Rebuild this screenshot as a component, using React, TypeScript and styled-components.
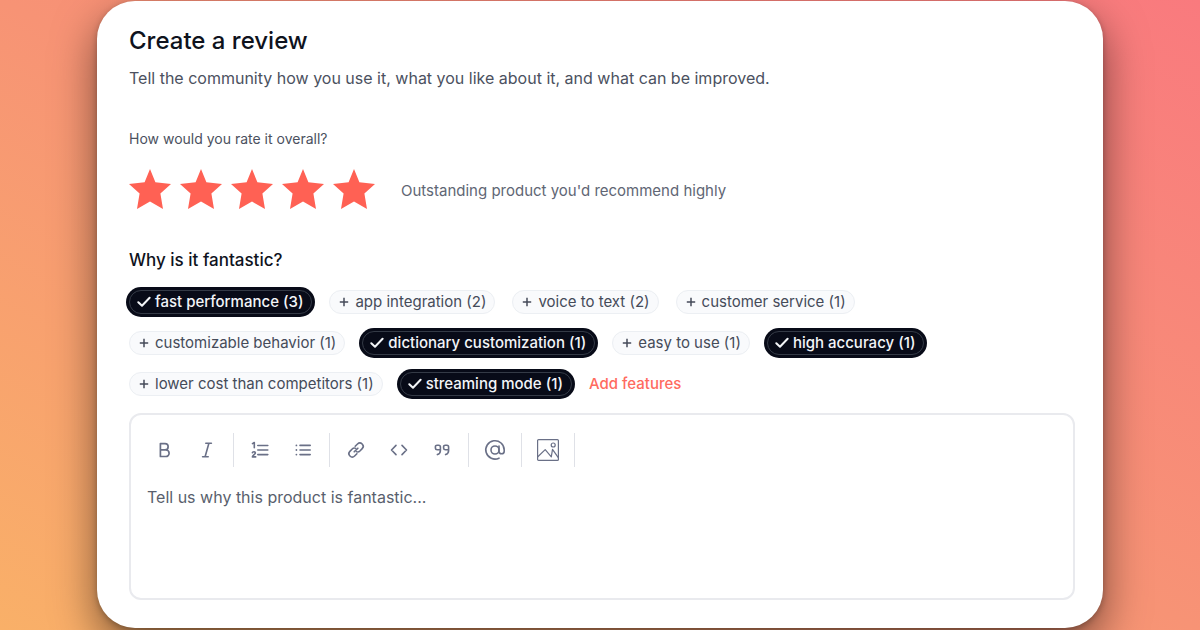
import React, { useState } from "react";
import styled, { createGlobalStyle } from "styled-components";

const GlobalStyle = createGlobalStyle`
  *, *::before, *::after { box-sizing: border-box; }
  body {
    margin: 0;
    font-family: Inter, "Liberation Sans", sans-serif;
    color: #4b5160;
    background: #f79375;
  }
  button, textarea { font-family: inherit; }
`;

const Page = styled.div`
  min-height: 100vh;
  padding: 1px 97px 2px;
  background: linear-gradient(to top right, #f9b068 0%, #f79375 50%, #f97a7e 100%);
`;

const Card = styled.main`
  display: flex;
  flex-direction: column;
  padding: 24px 28px 28px 32px;
  border-radius: 38px;
  background: #ffffff;
  box-shadow: 0 18px 44px rgba(0, 0, 0, 0.5), 0 2px 6px rgba(0, 0, 0, 0.25);
`;

const Title = styled.h1`
  margin: 0;
  font-size: 24px;
  line-height: 32px;
  font-weight: 500;
  color: #0f131d;
`;

const Intro = styled.p`
  margin: 9px 0 0;
  font-size: 16px;
  line-height: 24px;
`;

const Rating = styled.fieldset`
  min-width: 0;
  margin: 39px 0 0;
  padding: 0;
  border: 0;
`;

const Question = styled.legend`
  padding: 0;
  font-size: 14px;
  line-height: 20px;
`;

const RatingRow = styled.div`
  display: flex;
  align-items: center;
  gap: 26px;
  margin-top: 16px;
`;

const Stars = styled.div`
  display: flex;
  gap: 9px;
`;

const HiddenRadio = styled.input`
  position: absolute;
  width: 1px;
  height: 1px;
  margin: 0;
  opacity: 0;
`;

const StarLabel = styled.label<{ $filled: boolean }>`
  display: block;
  height: 44px;
  padding-top: 4px;
  color: ${(p) => (p.$filled ? "#ff6154" : "#e5e7eb")};
  cursor: pointer;
`;

const Verdict = styled.span`
  padding-top: 8px;
  font-size: 15px;
  line-height: 20px;
  color: #606674;
`;

const SectionTitle = styled.h2`
  margin: 39px 0 0;
  font-size: 17px;
  line-height: 24px;
  font-weight: 500;
  color: #0f131d;
`;

const Chips = styled.div`
  display: flex;
  flex-wrap: wrap;
  align-items: center;
  gap: 17px;
  margin-top: 18px;
`;

const Chip = styled.button<{ $on: boolean }>`
  display: flex;
  align-items: center;
  gap: ${(p) => (p.$on ? 4 : 6)}px;
  height: 24px;
  padding: 0 8px 0 ${(p) => (p.$on ? 7 : 9)}px;
  border: 1px solid ${(p) => (p.$on ? "#343a46" : "#eceff3")};
  border-radius: 12px;
  background: ${(p) => (p.$on ? "#080b18" : "#f9fafc")};
  box-shadow: ${(p) => (p.$on ? "0 0 0 3px #080b18" : "none")};
  color: ${(p) => (p.$on ? "#f3f5f8" : "#454b59")};
  font-size: 15px;
  line-height: 20px;
  font-weight: ${(p) => (p.$on ? 500 : 400)};
  white-space: nowrap;
  cursor: pointer;
`;

const AddLink = styled.a`
  font-size: 15px;
  line-height: 20px;
  font-weight: 500;
  color: #ff6b5f;
  text-decoration: none;
`;

const Editor = styled.section`
  margin-top: 17px;
  padding: 18px 16px;
  border: 2px solid #e9eaee;
  border-radius: 12px;
`;

const Toolbar = styled.div`
  display: flex;
  align-items: center;
  gap: 9px;
`;

const Tool = styled.button`
  display: grid;
  place-items: center;
  width: 34px;
  height: 34px;
  padding: 0;
  border: 0;
  border-radius: 6px;
  background: none;
  color: #6a7087;
  cursor: pointer;
`;

const Divider = styled.span`
  width: 1px;
  height: 34px;
  background: #dfe1e7;
`;

const Field = styled.textarea`
  display: block;
  width: 100%;
  height: 95px;
  margin-top: 18px;
  padding: 0;
  border: 0;
  outline: 0;
  resize: none;
  background: none;
  color: #0f131d;
  font-size: 16px;
  line-height: 24px;
  &::placeholder { color: #595f6d; opacity: 1; }
`;

const Star = () => (
  <svg width="42" height="40" viewBox="0 0 42 40" fill="currentColor" aria-hidden="true">
    <path d="M21 0 L26.4 13.2 L42 15 L31.4 24.6 L34 40 L21 32.6 L8 40 L10.6 24.6 L0 15 L15.6 13.2 Z" />
  </svg>
);

const Plus = () => (
  <svg width="10" height="10" viewBox="0 0 10 10" stroke="currentColor" strokeWidth="1.5" aria-hidden="true">
    <path d="M5 .8v8.4M.8 5h8.4" />
  </svg>
);

const Check = () => (
  <svg width="14" height="12" viewBox="0 0 14 12" fill="none" stroke="currentColor" strokeWidth="2" strokeLinecap="round" strokeLinejoin="round" aria-hidden="true">
    <path d="M1.3 6.2 5 9.8 12.6 1.8" />
  </svg>
);

type IconProps = { children: React.ReactNode; width?: number };

const Icon = ({ children, width = 1.6 }: IconProps) => (
  <svg width="24" height="24" viewBox="0 0 24 24" fill="none" stroke="currentColor" strokeWidth={width} strokeLinecap="round" strokeLinejoin="round" aria-hidden="true">
    {children}
  </svg>
);

const toolGroups = [
  [
    { name: "Bold", icon: <Icon width={1.7}><path d="M8.4 5.6H13a3.1 3.1 0 0 1 0 6.3H8.4zM8.4 11.9h5.4a3.3 3.3 0 0 1 0 6.6H8.4z" /></Icon> },
    { name: "Italic", icon: <Icon><path d="M10.8 5.3h5.6M7.6 18.7h5.6M13.9 5.3 10.1 18.7" /></Icon> },
  ],
  [
    {
      name: "Numbered list",
      icon: (
        <Icon>
          <path d="M9.8 7.5h10M9.8 12h10M9.8 16.6h10" />
          <path d="M4.5 5.6 6.3 4.5v5.3M4.4 14.7c.2-1.3 3-1.4 3 .2 0 1.2-2.8 2.3-3 4h3.3" />
        </Icon>
      ),
    },
    {
      name: "Bulleted list",
      icon: (
        <Icon>
          <path d="M9 7.4h10.2M9 12h10.2M9 16.6h10.2" />
          <path strokeWidth="1.8" d="M5.4 7.4h.01M5.4 12h.01M5.4 16.6h.01" />
        </Icon>
      ),
    },
  ],
  [
    {
      name: "Link",
      icon: (
        <Icon>
          <path d="M11.2 8.3 13.5 6a3.2 3.2 0 0 1 4.7 4.6l-2.3 2.4a3.2 3.2 0 0 1-3.6.6" />
          <path d="M12.9 15.7 10.6 18a3.2 3.2 0 0 1-4.7-4.6l2.3-2.4a3.2 3.2 0 0 1 3.6-.6" />
          <path d="M10.2 13.8 13.9 10.2" />
        </Icon>
      ),
    },
    { name: "Code", icon: <Icon><path d="m9 7.4-4.5 4.6L9 16.6M15 7.4l4.5 4.6-4.5 4.6" /></Icon> },
    {
      name: "Quote",
      icon: (
        <Icon>
          <path d="M10.3 11.8H7.2a1.8 1.8 0 0 1-1.8-1.7V8.8a1.6 1.6 0 0 1 1.7-1.6h1.6a1.7 1.7 0 0 1 1.7 1.7v3.6c0 2-1 3.5-3 4.1" />
          <path d="M18.5 11.8h-3.1a1.8 1.8 0 0 1-1.8-1.7V8.8a1.6 1.6 0 0 1 1.7-1.6h1.6a1.7 1.7 0 0 1 1.7 1.7v3.6c0 2-1 3.5-3 4.1" />
        </Icon>
      ),
    },
  ],
  [
    {
      name: "Mention",
      icon: (
        <Icon>
          <circle cx="12" cy="12" r="4" />
          <path d="M16 8v5.2a2.6 2.6 0 0 0 5.2 0V12A9.2 9.2 0 1 0 16 20.2" />
        </Icon>
      ),
    },
  ],
  [
    {
      name: "Image",
      icon: (
        <Icon width={1.2}>
          <rect x="1.6" y="1.6" width="20.8" height="20.8" rx="1" />
          <circle cx="17.2" cy="7" r="2" />
          <path d="m1.8 18.8 7.4-7.2 6.1 7.2 1.2-7.4 5.8 8.2" />
        </Icon>
      ),
    },
  ],
];

const features = [
  { label: "fast performance", count: 3, on: true },
  { label: "app integration", count: 2, on: false },
  { label: "voice to text", count: 2, on: false },
  { label: "customer service", count: 1, on: false },
  { label: "customizable behavior", count: 1, on: false },
  { label: "dictionary customization", count: 1, on: true },
  { label: "easy to use", count: 1, on: false },
  { label: "high accuracy", count: 1, on: true },
  { label: "lower cost than competitors", count: 1, on: false },
  { label: "streaming mode", count: 1, on: true },
];

export default function App() {
  const [rating, setRating] = useState(5);
  const [selected, setSelected] = useState(features.map((f) => f.on));
  const toggle = (index: number) => setSelected((all) => all.map((on, i) => (i === index ? !on : on)));

  return (
    <Page>
      <GlobalStyle />
      <Card>
        <Title>Create a review</Title>
        <Intro>Tell the community how you use it, what you like about it, and what can be improved.</Intro>
        <Rating>
          <Question>How would you rate it overall?</Question>
          <RatingRow>
            <Stars>
              {[1, 2, 3, 4, 5].map((n) => (
                <StarLabel key={n} $filled={n <= rating}>
                  <HiddenRadio type="radio" name="rating" aria-label={`${n} of 5`} checked={rating === n} onChange={() => setRating(n)} />
                  <Star />
                </StarLabel>
              ))}
            </Stars>
            <Verdict>Outstanding product you'd recommend highly</Verdict>
          </RatingRow>
        </Rating>
        <SectionTitle>Why is it fantastic?</SectionTitle>
        <Chips>
          {features.map((f, i) => (
            <Chip key={f.label} type="button" $on={selected[i]} aria-pressed={selected[i]} onClick={() => toggle(i)}>
              {selected[i] ? <Check /> : <Plus />}
              {`${f.label} (${f.count})`}
            </Chip>
          ))}
          <AddLink href="#features">Add features</AddLink>
        </Chips>
        <Editor aria-label="Review">
          <Toolbar role="toolbar" aria-label="Formatting">
            {toolGroups.map((group, g) => (
              <React.Fragment key={g}>
                {group.map((tool) => (
                  <Tool key={tool.name} type="button" aria-label={tool.name}>{tool.icon}</Tool>
                ))}
                <Divider />
              </React.Fragment>
            ))}
          </Toolbar>
          <Field aria-label="Your review" placeholder="Tell us why this product is fantastic..." />
        </Editor>
      </Card>
    </Page>
  );
}
